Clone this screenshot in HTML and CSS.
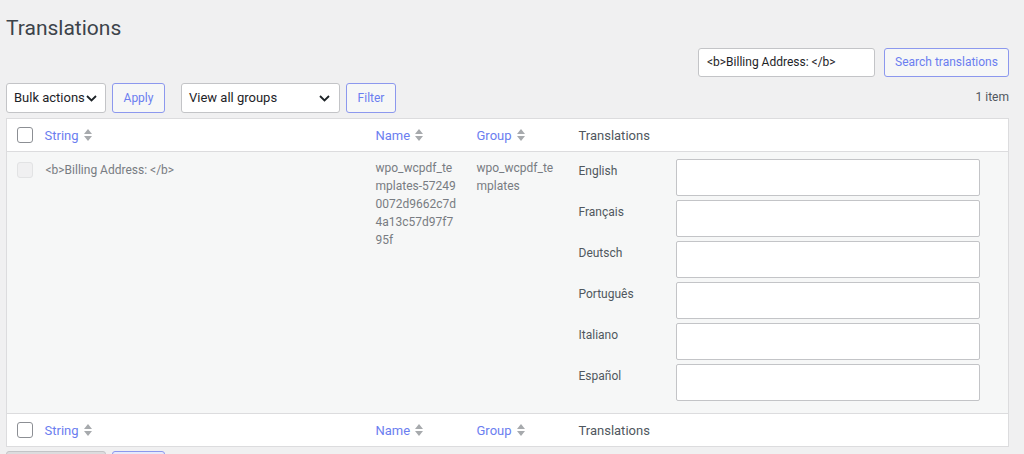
FILE: index.html
```html
<!DOCTYPE html>
<html>
<head>
<meta charset="utf-8">
<link rel="stylesheet" href="styles.css">
</head>
<body>
<div class="wrap">
  <h1 class="title">Translations</h1>
  <div class="search-row">
    <div class="input search-input">&lt;b&gt;Billing Address: &lt;/b&gt;</div>
    <div class="btn">Search translations</div>
  </div>
  <div class="toolbar">
    <div class="left">
      <div class="select bulk">Bulk actions<svg class="chev" width="11" height="7" viewBox="0 0 11 7"><path d="M1 1l4.5 4.5L10 1" fill="none" stroke="#1d2327" stroke-width="1.8"/></svg></div>
      <div class="btn">Apply</div>
      <div class="select groups">View all groups<svg class="chev" width="11" height="7" viewBox="0 0 11 7"><path d="M1 1l4.5 4.5L10 1" fill="none" stroke="#1d2327" stroke-width="1.8"/></svg></div>
      <div class="btn">Filter</div>
    </div>
    <div class="count">1 item</div>
  </div>
  <table class="list">
    <thead>
      <tr>
        <th class="col-cb"><span class="cb"></span></th>
        <th class="col-string"><span class="sort">String<svg class="si" width="8" height="14" viewBox="0 0 8 14"><path d="M0 6L4 1L8 6Z M0 8L4 13L8 8Z" fill="#a7aaad"/></svg></span></th>
        <th class="col-name"><span class="sort">Name<svg class="si" width="8" height="14" viewBox="0 0 8 14"><path d="M0 6L4 1L8 6Z M0 8L4 13L8 8Z" fill="#a7aaad"/></svg></span></th>
        <th class="col-group"><span class="sort">Group<svg class="si" width="8" height="14" viewBox="0 0 8 14"><path d="M0 6L4 1L8 6Z M0 8L4 13L8 8Z" fill="#a7aaad"/></svg></span></th>
        <th class="col-tr">Translations</th>
      </tr>
    </thead>
    <tbody>
      <tr class="row">
        <td class="col-cb"><span class="cb disabled"></span></td>
        <td class="col-string str">&lt;b&gt;Billing Address: &lt;/b&gt;</td>
        <td class="col-name wrapname">wpo_wcpdf_templates-572490072d9662c7d4a13c57d97f795f</td>
        <td class="col-group wrapname">wpo_wcpdf_templates</td>
        <td class="col-tr">
          <div class="langs">
            <div class="lang"><span class="lname">English</span><div class="ta"></div></div>
            <div class="lang"><span class="lname">Français</span><div class="ta"></div></div>
            <div class="lang"><span class="lname">Deutsch</span><div class="ta"></div></div>
            <div class="lang"><span class="lname">Português</span><div class="ta"></div></div>
            <div class="lang"><span class="lname">Italiano</span><div class="ta"></div></div>
            <div class="lang"><span class="lname">Español</span><div class="ta"></div></div>
          </div>
        </td>
      </tr>
    </tbody>
    <tfoot>
      <tr>
        <th class="col-cb"><span class="cb"></span></th>
        <th class="col-string"><span class="sort">String<svg class="si" width="8" height="14" viewBox="0 0 8 14"><path d="M0 6L4 1L8 6Z M0 8L4 13L8 8Z" fill="#a7aaad"/></svg></span></th>
        <th class="col-name"><span class="sort">Name<svg class="si" width="8" height="14" viewBox="0 0 8 14"><path d="M0 6L4 1L8 6Z M0 8L4 13L8 8Z" fill="#a7aaad"/></svg></span></th>
        <th class="col-group"><span class="sort">Group<svg class="si" width="8" height="14" viewBox="0 0 8 14"><path d="M0 6L4 1L8 6Z M0 8L4 13L8 8Z" fill="#a7aaad"/></svg></span></th>
        <th class="col-tr">Translations</th>
      </tr>
    </tfoot>
  </table>
  <div class="bottom-bar">
    <div class="ghost grey"></div>
    <div class="ghost blue"></div>
  </div>
</div>
</body>
</html>
```
FILE: styles.css
```css
html, body {
  margin: 0;
  padding: 0;
  background: #f0f0f1;
  font-family: Roboto, "Liberation Sans", sans-serif;
  color: #3c434a;
  font-size: 13px;
  overflow: hidden;
}
.wrap {
  padding: 0 15px 0 6px;
}
.title {
  margin: 0;
  padding-top: 14px;
  font-size: 21px;
  font-weight: 400;
  line-height: 28px;
  color: #3c434a;
}
.search-row {
  display: flex;
  justify-content: flex-end;
  gap: 9px;
  margin-top: 6px;
}
.input {
  box-sizing: border-box;
  height: 29px;
  background: #fff;
  border: 1px solid #c3c4c7;
  border-radius: 3px;
  padding: 0 8px;
  line-height: 27px;
  color: #1d2327;
  font-size: 12px;
}
.search-input { width: 177px; }
.btn {
  box-sizing: border-box;
  height: 30px;
  border: 1px solid #8c98ee;
  border-radius: 3px;
  background: #f6f7f7;
  color: #6b7ef0;
  padding: 0 11px;
  line-height: 28px;
  font-size: 12px;
  white-space: nowrap;
}
.search-row .btn { height: 29px; line-height: 27px; width: 125px; padding: 0; text-align: center; }
.toolbar {
  display: flex;
  justify-content: space-between;
  align-items: center;
  margin-top: 6px;
}
.toolbar .left {
  display: flex;
  align-items: center;
}
.toolbar .left .btn { text-align: center; padding: 0; }
.toolbar .left .btn:nth-child(2) { width: 53px; }
.toolbar .left .btn:nth-child(4) { width: 50px; }
.select {
  box-sizing: border-box;
  height: 30px;
  background: #fff;
  border: 1px solid #c3c4c7;
  border-radius: 3px;
  padding: 0 8px 0 7px;
  line-height: 28px;
  color: #1d2327;
  font-size: 13px;
  white-space: nowrap;
  display: flex;
  align-items: center;
  justify-content: space-between;
}
.select.bulk { width: 100px; margin-right: 6px; }
.select.groups { width: 159px; margin-left: 16px; margin-right: 6px; padding-right: 9px; }
.chev { flex: none; }
.count {
  color: #50575e;
  font-size: 12px;
  margin-top: -3px;
}
.list {
  margin-top: 5px;
  width: 100%;
  border-collapse: collapse;
  border: 1px solid #dcdcde;
  background: #fff;
  table-layout: fixed;
}
.list th {
  font-weight: 400;
  text-align: left;
  height: 32px;
  padding: 0;
  vertical-align: middle;
  color: #50575e;
  font-size: 13px;
}
.list thead tr { border-bottom: 1px solid #dcdcde; }
.list tfoot tr { border-top: 1px solid #dcdcde; }
.col-cb { width: 37px; padding-left: 10px !important; box-sizing: border-box; }
.col-string { width: 331px; }
.col-name { width: 101px; }
.col-group { width: 102px; }
.list th.col-string { padding-left: 1px; }
.cb {
  display: block;
  box-sizing: border-box;
  width: 16px;
  height: 16px;
  border: 1px solid #8c8f94;
  border-radius: 3px;
  background: #fff;
}
.cb.disabled {
  border-color: #e2e3e4;
  background: #f0f0f1;
}
.sort {
  color: #6b7ef0;
  display: inline-flex;
  align-items: center;
  gap: 5px;
}
.si { flex: none; }
.row { background: #f6f7f7; }
.row td {
  vertical-align: top;
  padding: 0;
}
.row td.col-cb { padding-top: 10px; }
.str {
  padding-top: 9px !important;
  padding-left: 2px !important;
  color: #787c82;
  font-size: 12px;
  line-height: 18px;
}
.wrapname {
  padding-top: 7px !important;
  padding-right: 20px !important;
  color: #787c82;
  font-size: 12px;
  line-height: 18px;
  word-break: break-all;
}
.langs {
  display: flex;
  flex-direction: column;
  gap: 4px;
  padding: 7px 28px 12px 0;
}
.lang {
  display: flex;
  align-items: flex-start;
}
.lname {
  width: 97px;
  flex: none;
  padding-top: 3px;
  font-size: 12px;
  line-height: 18px;
  color: #50575e;
}
.ta {
  flex: 1;
  box-sizing: border-box;
  height: 37px;
  background: #fff;
  border: 1px solid #c3c4c7;
  border-radius: 2px;
}
.bottom-bar {
  display: flex;
  gap: 6px;
  margin-top: 4px;
}
.ghost {
  height: 30px;
  box-sizing: border-box;
  border-radius: 3px;
}
.ghost.grey { width: 100px; background: #dcdcde; border: 1px solid #c3c4c7; }
.ghost.blue { width: 53px; background: #e6e9fb; border: 1px solid #8c98ee; }
```
